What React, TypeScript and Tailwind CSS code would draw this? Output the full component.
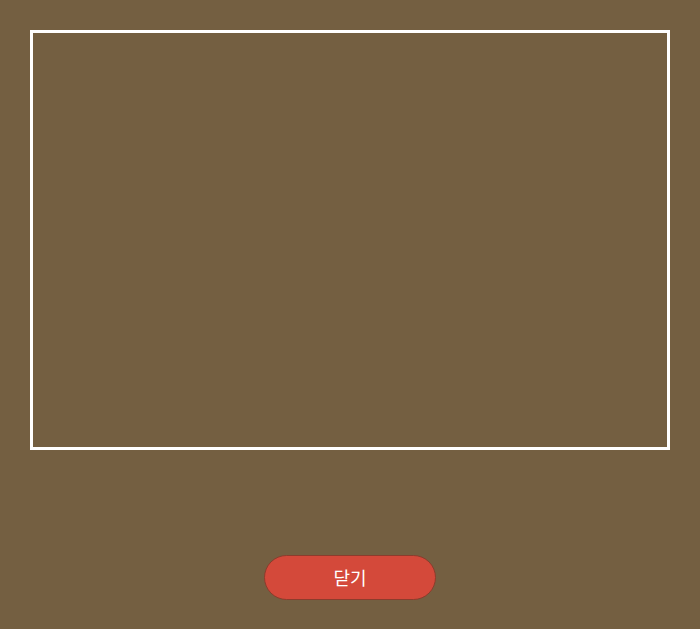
export default function App() {
  return (
    <div className="flex min-h-[629px] w-full flex-col items-center bg-[#745f41] px-[30px] pt-[30px]">
      <div className="h-[420px] w-[640px] border-[3px] border-white" />
      <button
        type="button"
        className="mt-[105px] flex h-[45px] w-[172px] items-center justify-center rounded-full border border-[#8c3c2c] bg-[#d4493a] text-[18px] text-white"
        style={{ fontFamily: '"Noto Sans CJK KR", "Noto Sans", sans-serif' }}
      >
        닫기
      </button>
    </div>
  );
}
